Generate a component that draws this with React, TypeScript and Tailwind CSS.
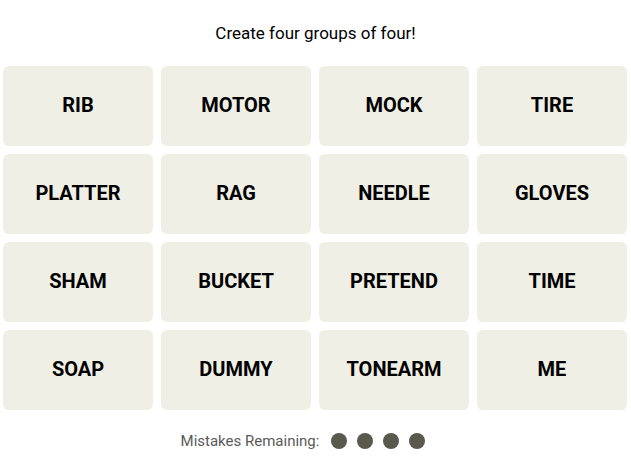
const words = [
  "RIB", "MOTOR", "MOCK", "TIRE",
  "PLATTER", "RAG", "NEEDLE", "GLOVES",
  "SHAM", "BUCKET", "PRETEND", "TIME",
  "SOAP", "DUMMY", "TONEARM", "ME",
];

export default function App() {
  return (
    <div className="w-[631px] h-[456px] bg-white font-['Roboto',sans-serif] text-black">
      <p className="pt-[22px] h-[66px] text-center text-[17px] leading-[22px]">
        Create four groups of four!
      </p>
      <div className="grid grid-cols-[repeat(4,150px)] gap-2 pl-[3px]">
        {words.map((w) => (
          <button
            key={w}
            className="h-20 rounded-md bg-[#efefe6] pb-[2px] text-[20px] font-bold uppercase text-black"
          >
            {w}
          </button>
        ))}
      </div>
      <div className="mt-[23px] flex items-center justify-center gap-[12px] pr-[25px]">
        <span className="text-[15px] leading-4 text-[#5a5a5a]">Mistakes Remaining:</span>
        <div className="flex gap-[10px]">
          {[0, 1, 2, 3].map((i) => (
            <span key={i} className="h-4 w-4 rounded-full bg-[#5a594e]" />
          ))}
        </div>
      </div>
    </div>
  );
}
